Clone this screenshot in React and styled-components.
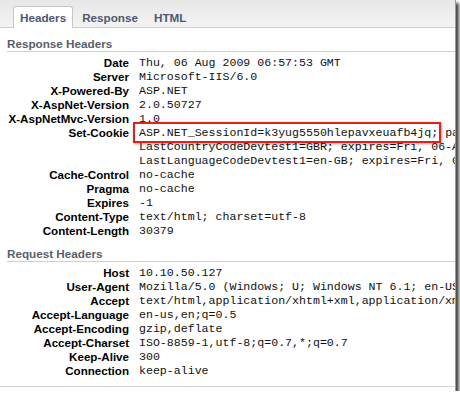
import React from "react";
import styled, { createGlobalStyle } from "styled-components";

const GlobalStyle = createGlobalStyle`
  html, body {
    margin: 0;
    padding: 0;
    background: #fff;
  }
  body {
    font-family: "Liberation Sans", Arial, sans-serif;
  }
`;

const Frame = styled.div`
  width: 456px;
  height: 391px;
  box-sizing: border-box;
  border-right: 1px solid #9a9a9a;
  background: #fff;
  box-shadow: 3px 3px 3px rgba(0, 0, 0, 0.72);
  overflow: hidden;
`;

const TabBar = styled.div`
  display: flex;
  align-items: flex-end;
  height: 28px;
  box-sizing: border-box;
  padding-left: 13px;
  background: linear-gradient(#e7e7e7, #f4f4f4);
  border-bottom: 1px solid #cdcdcd;
`;

const Tab = styled.div`
  height: 22px;
  box-sizing: border-box;
  margin: 0 2px -1px 0;
  padding: 0 6px;
  line-height: 21px;
  font-size: 11.7px;
  font-weight: bold;
  color: #4a5a70;
  border: 1px solid ${(p) => (p.$active ? "#c6c6c6" : "transparent")};
  border-bottom: none;
  border-radius: 3px 3px 0 0;
  background: ${(p) => (p.$active ? "#fff" : "transparent")};
`;

const Section = styled.div`
  padding-bottom: ${(p) => (p.$last ? "8px" : "0")};
  border-bottom: ${(p) => (p.$last ? "1px solid #d2d2d2" : "none")};
`;

const SectionTitle = styled.div`
  margin-left: 7px;
  padding-top: 8px;
  line-height: 15px;
  font-size: 11.7px;
  font-weight: bold;
  color: #58606c;
  border-bottom: 1px solid #cfcfcf;
`;

const Rows = styled.div`
  display: grid;
  grid-template-columns: 129px minmax(0, 1fr);
  column-gap: 10px;
  padding-top: 4px;
`;

const Label = styled.div`
  text-align: right;
  line-height: 14px;
  font-size: 11.6px;
  font-weight: bold;
  color: #000;
  white-space: nowrap;
`;

const Value = styled.div`
  line-height: 14px;
  font-family: "Liberation Mono", "Courier New", monospace;
  font-size: 11.6px;
  color: #111;
  white-space: pre;
`;

const Marked = styled.span`
  position: relative;
  padding: 2px 1px 2px 4px;
  margin: 0 -3px 0 -6px;
  border: 2px solid #e2211f;
  box-shadow: 1px 1px 3px rgba(0, 0, 0, 0.35);
`;

const responseHeaders = [
  ["Date", "Thu, 06 Aug 2009 06:57:53 GMT"],
  ["Server", "Microsoft-IIS/6.0"],
  ["X-Powered-By", "ASP.NET"],
  ["X-AspNet-Version", "2.0.50727"],
  ["X-AspNetMvc-Version", "1.0"],
  [
    "Set-Cookie",
    <>
      <Marked>ASP.NET_SessionId=k3yug5550hlepavxeuafb4jq;</Marked> path=/; HttpOnly
      {"\n"}LastCountryCodeDevtest1=GBR; expires=Fri, 06-Aug-2010 06:57:53 GMT; path=/
      {"\n"}LastLanguageCodeDevtest1=en-GB; expires=Fri, 06-Aug-2010 06:57:53 GMT; path=/
    </>,
  ],
  ["Cache-Control", "no-cache"],
  ["Pragma", "no-cache"],
  ["Expires", "-1"],
  ["Content-Type", "text/html; charset=utf-8"],
  ["Content-Length", "30379"],
];

const requestHeaders = [
  ["Host", "10.10.50.127"],
  ["User-Agent", "Mozilla/5.0 (Windows; U; Windows NT 6.1; en-US; rv:1.9.1.2) Gecko/20090729 Firefox/3.5.2"],
  ["Accept", "text/html,application/xhtml+xml,application/xml;q=0.9,*/*;q=0.8"],
  ["Accept-Language", "en-us,en;q=0.5"],
  ["Accept-Encoding", "gzip,deflate"],
  ["Accept-Charset", "ISO-8859-1,utf-8;q=0.7,*;q=0.7"],
  ["Keep-Alive", "300"],
  ["Connection", "keep-alive"],
];

const HeaderList = ({ items }) => (
  <Rows>
    {items.map(([name, value]) => (
      <React.Fragment key={name}>
        <Label>{name}</Label>
        <Value>{value}</Value>
      </React.Fragment>
    ))}
  </Rows>
);

const App = () => {
  return (
    <>
      <GlobalStyle />
      <Frame>
        <TabBar>
          <Tab $active>Headers</Tab>
          <Tab>Response</Tab>
          <Tab>HTML</Tab>
        </TabBar>
        <Section>
          <SectionTitle>Response Headers</SectionTitle>
          <HeaderList items={responseHeaders} />
        </Section>
        <Section $last>
          <SectionTitle>Request Headers</SectionTitle>
          <HeaderList items={requestHeaders} />
        </Section>
      </Frame>
    </>
  );
};

export default App;
